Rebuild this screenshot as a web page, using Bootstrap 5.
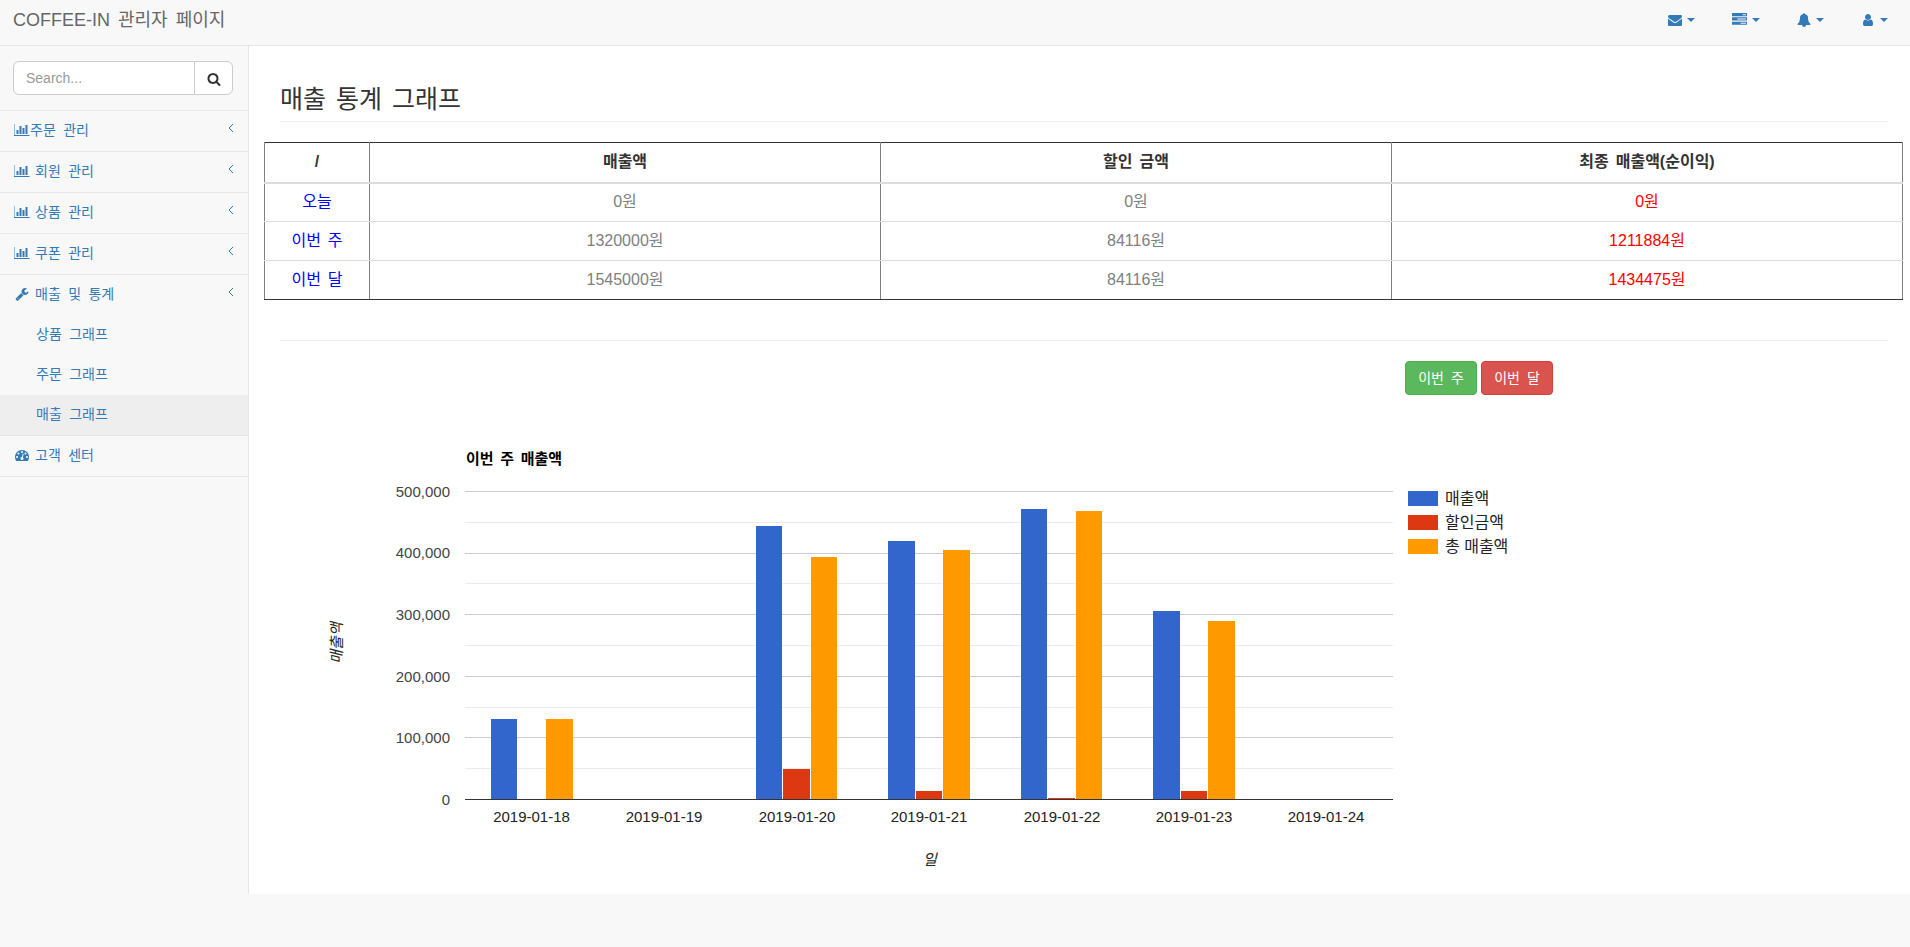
<!DOCTYPE html>
<html lang="ko">
<head>
    <meta charset="UTF-8">
    <meta name="viewport" content="width=device-width, initial-scale=1.0">
    <title>COFFEE-IN 관리자 페이지</title>
    <link href="https://cdn.jsdelivr.net/npm/bootstrap@5.3.0/dist/css/bootstrap.min.css" rel="stylesheet">
    <style>
        body {
            font-family: "Liberation Sans", "Noto Sans CJK KR", sans-serif;
            font-size: 14px;
            line-height: 20px;
            color: #333;
            background-color: #f8f8f8;
        }
        .fa {
            fill: currentColor;
            flex: none;
        }
        .top-bar {
            height: 46px;
            padding: 0;
            background-color: #f8f8f8;
            border-bottom: 1px solid #e7e7e7;
        }
        .top-brand {
            margin: 0 0 5px 13px;
            padding: 0;
            font-size: 18px;
            color: #666;
            word-spacing: 3px;
        }
        .top-links {
            gap: 37px;
            margin-right: 22px;
        }
        .top-links .nav-link {
            padding: 0;
            color: #337ab7;
            display: flex;
            align-items: center;
            height: 46px;
            margin-top: -6px;
        }
        .top-links .dropdown-toggle::after {
            border-top: 4px solid;
            border-left: 4px solid transparent;
            border-right: 4px solid transparent;
            border-bottom: 0;
            margin-left: 5px;
            vertical-align: middle;
        }
        .page-body {
            height: 848px;
        }
        .side-col {
            width: 249px;
            flex: none;
            background-color: #f8f8f8;
            border-right: 1px solid #e7e7e7;
        }
        .side-search {
            padding: 15px 15px 15px 13px;
            height: 65px;
            border-bottom: 1px solid #e7e7e7;
        }
        .side-search .form-control,
        .side-search .btn {
            height: 34px;
            font-size: 14px;
            border-color: #ccc;
            background-color: #fff;
            color: #333;
        }
        .side-search .form-control {
            padding: 6px 12px;
            line-height: 20px;
        }
        .side-search .form-control::placeholder {
            color: #999;
        }
        .side-search .btn {
            width: 39px;
            padding: 0;
        }
        .side-item {
            display: flex;
            align-items: center;
            height: 41px;
            padding: 0 14px 2px 14px;
            color: #337ab7;
            text-decoration: none;
            border-bottom: 1px solid #e7e7e7;
            word-spacing: 3.5px;
        }
        .side-item .fa {
            margin-right: 5px;
        }
        .side-item .fa.side-tight {
            margin-right: 0;
        }
        .side-label {
            flex-grow: 1;
        }
        .side-sub {
            display: block;
            height: 40px;
            padding: 9px 0 0 36px;
            color: #337ab7;
            text-decoration: none;
            word-spacing: 3.5px;
        }
        .side-sub.is-current {
            background-color: #eee;
            height: 41px;
            border-bottom: 1px solid #e7e7e7;
        }
        .side-item.no-line {
            border-bottom: 0;
            height: 40px;
        }
        .side-angle {
            margin-top: -5px;
            fill: none;
            stroke: #337ab7;
            stroke-width: 1;
        }
        .main-col {
            flex-grow: 1;
            min-width: 0;
            background-color: #fff;
            padding: 0 7px 0 15px;
        }
        .title-block {
            margin: 0 15px 20px 16px;
            padding-top: 37px;
            padding-bottom: 6px;
            border-bottom: 1px solid #eee;
        }
        .title-block h1 {
            margin: 0;
            font-size: 25px;
            line-height: 32px;
            font-weight: 400;
            word-spacing: 3px;
        }
        .sales-table {
            width: 1639px;
            table-layout: fixed;
            border-collapse: collapse;
            margin: 0;
            font-size: 16px;
            border: 1px solid #333;
            word-spacing: 2.5px;
        }
        .sales-table > :not(caption) > * > * {
            height: 39px;
            padding: 0;
            text-align: center;
            vertical-align: middle;
            color: #808080;
            box-shadow: none;
            border-left: 1px solid #808080;
            border-right: 1px solid #808080;
            border-top: 0;
            border-bottom: 1px solid #ddd;
        }
        .sales-table > thead > tr > th {
            height: 40px;
            color: #333;
            font-weight: 700;
            border-bottom: 2px solid #ddd;
        }
        .sales-table > tbody > tr:last-child > td {
            border-bottom: 1px solid #333;
        }
        .sales-table > tbody > tr > td.cell-period {
            color: #00f;
        }
        .sales-table > tbody > tr > td.cell-net {
            color: #f00;
        }
        .sales-table .col-first { width: 105px; }
        .sales-table .col-money { width: 511px; }
        .section-rule {
            margin: 40px 15px 20px 16px;
            border: 0;
            border-top: 1px solid #eee;
            opacity: 1;
        }
        .range-btns {
            gap: 4px;
            margin-left: 1141px;
        }
        .range-btns .btn {
            width: 72px;
            height: 34px;
            padding: 0;
            font-size: 14px;
            line-height: 32px;
            border-radius: 4px;
            word-spacing: 3px;
        }
        .btn-week {
            color: #fff;
            background-color: #5cb85c;
            border-color: #4cae4c;
        }
        .btn-month {
            color: #fff;
            background-color: #d9534f;
            border-color: #d43f3a;
        }
        .sales-chart {
            display: block;
            margin: 35px 0 0 36px;
        }
        .sales-chart text {
            font-family: "Liberation Sans", "Noto Sans CJK KR", sans-serif;
            font-size: 15px;
        }
        .sales-chart .tick-y { fill: #444; text-anchor: end; }
        .sales-chart .tick-x { fill: #222; text-anchor: middle; }
        .sales-chart .chart-name { fill: #000; font-weight: 700; word-spacing: 2.5px; }
        .sales-chart .axis-name { fill: #222; font-style: italic; text-anchor: middle; }
        .sales-chart .key-name { fill: #222; font-size: 16px; }
        .sales-chart line { shape-rendering: crispEdges; stroke-width: 1; }
        .sales-chart .grid-major { stroke: #ccc; }
        .sales-chart .grid-minor { stroke: #ebebeb; }
        .sales-chart .grid-base { stroke: #333; }
        .sales-chart rect { shape-rendering: crispEdges; }
    </style>
</head>
<body>
    <svg width="0" height="0" class="position-absolute">
        <symbol id="i-bar" viewBox="0 0 2048 1792"><path d="M576 896v512h-256v-512h256zm384-512v1024h-256v-1024h256zm1024 1152v128h-2048v-1536h128v1408h1920zm-640-896v768h-256v-768h256zm384-384v1152h-256v-1152h256z"/></symbol>
        <symbol id="i-search" viewBox="0 0 1792 1792"><path d="M1216 832q0-185-131.5-316.5t-316.5-131.5-316.5 131.5-131.5 316.5 131.5 316.5 316.5 131.5 316.5-131.5 131.5-316.5zm512 832q0 52-38 90t-90 38q-54 0-90-38l-343-342q-179 124-399 124-143 0-273.5-55.5t-225-150-150-225-55.5-273.5 55.5-273.5 150-225 225-150 273.5-55.5 273.5 55.5 225 150 150 225 55.5 273.5q0 220-124 399l343 343q37 37 37 90z"/></symbol>
        <symbol id="i-mail" viewBox="0 0 1792 1792"><path d="M1792 710v794q0 66-47 113t-113 47h-1472q-66 0-113-47t-47-113v-794q44 49 101 87 362 246 497 345 57 42 92.5 65.5t94.5 48 110 24.5h2q51 0 110-24.5t94.5-48 92.5-65.5q170-123 498-345 57-39 100-87zm0-294q0 79-49 151t-122 123q-376 261-468 325-10 7-42.5 30.5t-54 38-52 32.5-57.5 27-50 9h-2q-23 0-50-9t-57.5-27-52-32.5-54-38-42.5-30.5q-91-64-262-182.5t-205-142.5q-62-42-117-115.5t-55-136.5q0-78 41.5-130t118.5-52h1472q65 0 112.5 47t47.5 113z"/></symbol>
        <symbol id="i-tasks" viewBox="0 0 1792 1792"><path d="M1024 1408h640v-128h-640v128zm-384-512h1024v-128h-1024v128zm640-512h384v-128h-384v128zm512 832v256q0 26-19 45t-45 19h-1664q-26 0-45-19t-19-45v-256q0-26 19-45t45-19h1664q26 0 45 19t19 45zm0-512v256q0 26-19 45t-45 19h-1664q-26 0-45-19t-19-45v-256q0-26 19-45t45-19h1664q26 0 45 19t19 45zm0-512v256q0 26-19 45t-45 19h-1664q-26 0-45-19t-19-45v-256q0-26 19-45t45-19h1664q26 0 45 19t19 45z"/></symbol>
        <symbol id="i-bell" viewBox="0 0 1792 1792"><path d="M912 1696q0-16-16-16-59 0-101.5-42.5t-42.5-101.5q0-16-16-16t-16 16q0 73 51.5 124.5t124.5 51.5q16 0 16-16zm816-288q0 52-38 90t-90 38h-448q0 106-75 181t-181 75-181-75-75-181h-448q-52 0-90-38t-38-90q50-42 91-88t85-119.5 74.5-158.5 50-206 19.5-260q0-152 117-282.5t307-158.5q-8-19-8-39 0-40 28-68t68-28 68 28 28 68q0 20-8 39 190 28 307 158.5t117 282.5q0 139 19.5 260t50 206 74.5 158.5 85 119.5 91 88z"/></symbol>
        <symbol id="i-user" viewBox="0 0 1792 1792"><path d="M1536 1399q0 109-62.5 187t-150.5 78h-854q-88 0-150.5-78t-62.5-187q0-85 8.5-160.5t31.5-152 58.5-131 94-89 134.5-34.5q131 128 313 128t313-128q76 0 134.5 34.5t94 89 58.5 131 31.5 152 8.5 160.5zm-256-887q0 159-112.5 271.5t-271.5 112.5-271.5-112.5-112.5-271.5 112.5-271.5 271.5-112.5 271.5 112.5 112.5 271.5z"/></symbol>
        <symbol id="i-wrench" viewBox="0 0 1792 1792"><path d="M448 1472q0-26-19-45t-45-19-45 19-19 45 19 45 45 19 45-19 19-45zm644-420l-682 682q-37 37-90 37-52 0-91-37l-106-108q-38-36-38-90 0-53 38-91l681-681q39 98 114.5 173.5t173.5 114.5zm634-435q0 39-23 106-47 134-164.5 217.5t-258.5 83.5q-185 0-316.5-131.5t-131.5-316.5 131.5-316.5 316.5-131.5q58 0 121.5 16.5t107.5 46.5q16 11 16 28t-16 28l-293 169v224l193 107q5-3 79-48.5t135.5-81 70.5-35.5q15 0 23.5 10t8.5 25z"/></symbol>
        <symbol id="i-gauge" viewBox="0 0 1792 1792"><path d="M384 1152q0-53-37.5-90.5t-90.5-37.5-90.5 37.5-37.5 90.5 37.5 90.5 90.5 37.5 90.5-37.5 37.5-90.5zm192-448q0-53-37.5-90.5t-90.5-37.5-90.5 37.5-37.5 90.5 37.5 90.5 90.5 37.5 90.5-37.5 37.5-90.5zm428 481l101-382q6-26-7.5-48.5t-38.5-29.5-48 6.5-30 39.5l-101 382q-60 5-107 43.5t-63 98.5q-20 77 20 146t117 89 146-20 89-117q16-60-6-117t-72-91zm660-33q0-53-37.5-90.5t-90.5-37.5-90.5 37.5-37.5 90.5 37.5 90.5 90.5 37.5 90.5-37.5 37.5-90.5zm-640-640q0-53-37.5-90.5t-90.5-37.5-90.5 37.5-37.5 90.5 37.5 90.5 90.5 37.5 90.5-37.5 37.5-90.5zm448 192q0-53-37.5-90.5t-90.5-37.5-90.5 37.5-37.5 90.5 37.5 90.5 90.5 37.5 90.5-37.5 37.5-90.5zm320 448q0 261-141 483-19 29-54 29h-1402q-35 0-54-29-141-221-141-483 0-182 71-348t191-286 286-191 348-71 348 71 286 191 191 286 71 348z"/></symbol>
    </svg>

    <nav class="navbar top-bar d-flex justify-content-between align-items-center">
        <a class="navbar-brand top-brand" href="#">COFFEE-IN 관리자 페이지</a>
        <ul class="nav top-links">
            <li class="nav-item"><a class="nav-link dropdown-toggle" href="#"><svg class="fa" width="14" height="14"><use href="#i-mail"/></svg></a></li>
            <li class="nav-item"><a class="nav-link dropdown-toggle" href="#"><svg class="fa" width="15" height="15"><use href="#i-tasks"/></svg></a></li>
            <li class="nav-item"><a class="nav-link dropdown-toggle" href="#"><svg class="fa" width="14" height="14"><use href="#i-bell"/></svg></a></li>
            <li class="nav-item"><a class="nav-link dropdown-toggle" href="#"><svg class="fa" width="14" height="14"><use href="#i-user"/></svg></a></li>
        </ul>
    </nav>

    <div class="d-flex page-body">
        <aside class="side-col">
            <div class="side-search">
                <div class="input-group">
                    <input type="text" class="form-control" placeholder="Search...">
                    <button class="btn" type="button"><svg class="fa" width="14" height="14"><use href="#i-search"/></svg></button>
                </div>
            </div>
            <a class="side-item" href="#"><svg class="fa side-tight" width="16" height="14"><use href="#i-bar"/></svg><span class="side-label">주문 관리</span><svg class="side-angle" width="6" height="10"><polyline points="5,1 1,5 5,9"/></svg></a>
            <a class="side-item" href="#"><svg class="fa" width="16" height="14"><use href="#i-bar"/></svg><span class="side-label">회원 관리</span><svg class="side-angle" width="6" height="10"><polyline points="5,1 1,5 5,9"/></svg></a>
            <a class="side-item" href="#"><svg class="fa" width="16" height="14"><use href="#i-bar"/></svg><span class="side-label">상품 관리</span><svg class="side-angle" width="6" height="10"><polyline points="5,1 1,5 5,9"/></svg></a>
            <a class="side-item" href="#"><svg class="fa" width="16" height="14"><use href="#i-bar"/></svg><span class="side-label">쿠폰 관리</span><svg class="side-angle" width="6" height="10"><polyline points="5,1 1,5 5,9"/></svg></a>
            <a class="side-item no-line" href="#"><svg class="fa" width="16" height="14"><use href="#i-wrench"/></svg><span class="side-label">매출 및 통계</span><svg class="side-angle" width="6" height="10"><polyline points="5,1 1,5 5,9"/></svg></a>
            <a class="side-sub" href="#">상품 그래프</a>
            <a class="side-sub" href="#">주문 그래프</a>
            <a class="side-sub is-current" href="#">매출 그래프</a>
            <a class="side-item" href="#"><svg class="fa" width="16" height="14"><use href="#i-gauge"/></svg><span class="side-label">고객 센터</span></a>
        </aside>

        <main class="main-col">
            <div class="title-block">
                <h1>매출 통계 그래프</h1>
            </div>

            <table class="table sales-table">
                <colgroup>
                    <col class="col-first">
                    <col class="col-money">
                    <col class="col-money">
                    <col class="col-money">
                </colgroup>
                <thead>
                    <tr>
                        <th>/</th>
                        <th>매출액</th>
                        <th>할인 금액</th>
                        <th>최종 매출액(순이익)</th>
                    </tr>
                </thead>
                <tbody>
                    <tr>
                        <td class="cell-period">오늘</td>
                        <td>0원</td>
                        <td>0원</td>
                        <td class="cell-net">0원</td>
                    </tr>
                    <tr>
                        <td class="cell-period">이번 주</td>
                        <td>1320000원</td>
                        <td>84116원</td>
                        <td class="cell-net">1211884원</td>
                    </tr>
                    <tr>
                        <td class="cell-period">이번 달</td>
                        <td>1545000원</td>
                        <td>84116원</td>
                        <td class="cell-net">1434475원</td>
                    </tr>
                </tbody>
            </table>

            <hr class="section-rule">

            <div class="d-flex range-btns">
                <button class="btn btn-week" type="button">이번 주</button>
                <button class="btn btn-month" type="button">이번 달</button>
            </div>

            <svg class="sales-chart" width="1300" height="450" viewBox="300 430 1300 450">
                <text class="chart-name" x="466" y="464">이번 주 매출액</text>

                <line class="grid-minor" x1="465" x2="1393" y1="522.5" y2="522.5"/>
                <line class="grid-minor" x1="465" x2="1393" y1="583.5" y2="583.5"/>
                <line class="grid-minor" x1="465" x2="1393" y1="645.5" y2="645.5"/>
                <line class="grid-minor" x1="465" x2="1393" y1="707.5" y2="707.5"/>
                <line class="grid-minor" x1="465" x2="1393" y1="768.5" y2="768.5"/>
                <line class="grid-major" x1="465" x2="1393" y1="491.5" y2="491.5"/>
                <line class="grid-major" x1="465" x2="1393" y1="553.5" y2="553.5"/>
                <line class="grid-major" x1="465" x2="1393" y1="614.5" y2="614.5"/>
                <line class="grid-major" x1="465" x2="1393" y1="676.5" y2="676.5"/>
                <line class="grid-major" x1="465" x2="1393" y1="737.5" y2="737.5"/>

                <rect fill="#3366cc" x="491" y="719" width="26" height="80"/>
                <rect fill="#ff9900" x="546" y="719" width="27" height="80"/>

                <rect fill="#3366cc" x="756" y="526" width="26" height="273"/>
                <rect fill="#dc3912" x="783" y="769" width="27" height="30"/>
                <rect fill="#ff9900" x="811" y="557" width="26" height="242"/>

                <rect fill="#3366cc" x="888" y="541" width="27" height="258"/>
                <rect fill="#dc3912" x="916" y="791" width="26" height="8"/>
                <rect fill="#ff9900" x="943" y="550" width="27" height="249"/>

                <rect fill="#3366cc" x="1021" y="509" width="26" height="290"/>
                <rect fill="#dc3912" x="1048" y="798" width="27" height="1"/>
                <rect fill="#ff9900" x="1076" y="511" width="26" height="288"/>

                <rect fill="#3366cc" x="1153" y="611" width="27" height="188"/>
                <rect fill="#dc3912" x="1181" y="791" width="26" height="8"/>
                <rect fill="#ff9900" x="1208" y="621" width="27" height="178"/>

                <line class="grid-base" x1="465" x2="1393" y1="799.5" y2="799.5"/>

                <text class="tick-y" x="450" y="497">500,000</text>
                <text class="tick-y" x="450" y="558">400,000</text>
                <text class="tick-y" x="450" y="620">300,000</text>
                <text class="tick-y" x="450" y="682">200,000</text>
                <text class="tick-y" x="450" y="743">100,000</text>
                <text class="tick-y" x="450" y="805">0</text>

                <text class="tick-x" x="531.5" y="822">2019-01-18</text>
                <text class="tick-x" x="664" y="822">2019-01-19</text>
                <text class="tick-x" x="797" y="822">2019-01-20</text>
                <text class="tick-x" x="929" y="822">2019-01-21</text>
                <text class="tick-x" x="1062" y="822">2019-01-22</text>
                <text class="tick-x" x="1194" y="822">2019-01-23</text>
                <text class="tick-x" x="1326" y="822">2019-01-24</text>

                <text class="axis-name" x="930" y="865">일</text>
                <text class="axis-name" transform="rotate(-90 342 643)" x="342" y="643">매출액</text>

                <rect fill="#3366cc" x="1408" y="491" width="30" height="15"/>
                <text class="key-name" x="1445" y="504">매출액</text>
                <rect fill="#dc3912" x="1408" y="515" width="30" height="15"/>
                <text class="key-name" x="1445" y="528">할인금액</text>
                <rect fill="#ff9900" x="1408" y="539" width="30" height="15"/>
                <text class="key-name" x="1445" y="552">총 매출액</text>
            </svg>
        </main>
    </div>

    <script src="https://cdn.jsdelivr.net/npm/bootstrap@5.3.0/dist/js/bootstrap.bundle.min.js"></script>
</body>
</html>
